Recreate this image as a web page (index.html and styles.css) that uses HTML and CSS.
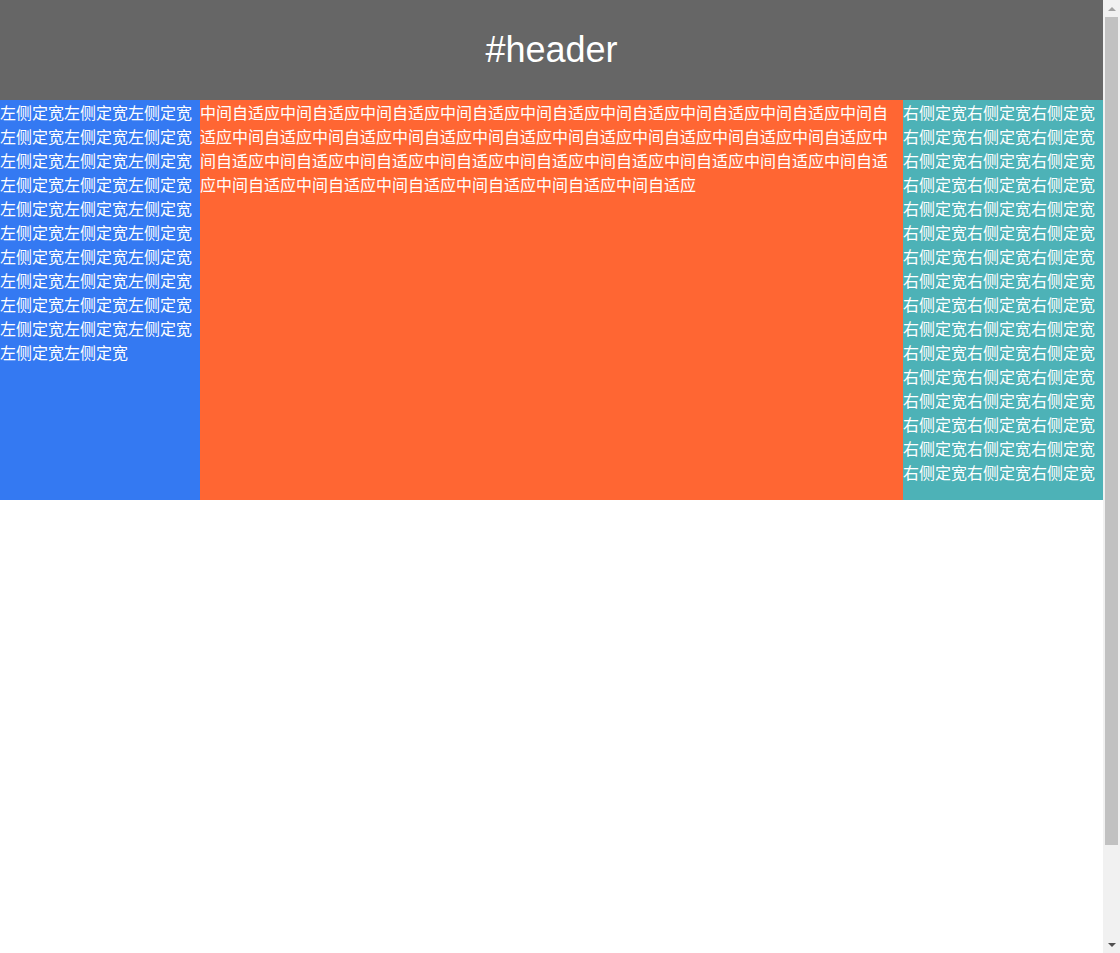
FILE: index.html
```html
<!DOCTYPE html>
<html lang="zh">
<head>
<meta charset="utf-8">
<title>三栏布局</title>
<link rel="stylesheet" href="styles.css">
</head>
<body>
<div class="page">
  <div class="header">#header</div>
  <div class="main">
    <div class="left">左侧定宽左侧定宽左侧定宽左侧定宽左侧定宽左侧定宽左侧定宽左侧定宽左侧定宽左侧定宽左侧定宽左侧定宽左侧定宽左侧定宽左侧定宽左侧定宽左侧定宽左侧定宽左侧定宽左侧定宽左侧定宽左侧定宽左侧定宽左侧定宽左侧定宽左侧定宽左侧定宽左侧定宽左侧定宽左侧定宽左侧定宽左侧定宽</div>
    <div class="center">中间自适应中间自适应中间自适应中间自适应中间自适应中间自适应中间自适应中间自适应中间自适应中间自适应中间自适应中间自适应中间自适应中间自适应中间自适应中间自适应中间自适应中间自适应中间自适应中间自适应中间自适应中间自适应中间自适应中间自适应中间自适应中间自适应中间自适应中间自适应中间自适应中间自适应中间自适应中间自适应</div>
    <div class="right">右侧定宽右侧定宽右侧定宽右侧定宽右侧定宽右侧定宽右侧定宽右侧定宽右侧定宽右侧定宽右侧定宽右侧定宽右侧定宽右侧定宽右侧定宽右侧定宽右侧定宽右侧定宽右侧定宽右侧定宽右侧定宽右侧定宽右侧定宽右侧定宽右侧定宽右侧定宽右侧定宽右侧定宽右侧定宽右侧定宽右侧定宽右侧定宽右侧定宽右侧定宽右侧定宽右侧定宽右侧定宽右侧定宽右侧定宽右侧定宽右侧定宽右侧定宽右侧定宽右侧定宽右侧定宽右侧定宽右侧定宽右侧定宽</div>
  </div>
</div>
<div class="scrollbar" aria-hidden="true">
  <div class="sb-up"></div>
  <div class="sb-track"><div class="sb-thumb"></div></div>
  <div class="sb-down"></div>
</div>
</body>
</html>
```

FILE: styles.css
```css
html, body {
  margin: 0;
  padding: 0;
}
body {
  font-family: "Noto Sans CJK SC", "Liberation Sans", sans-serif;
  font-size: 16px;
  line-height: 24px;
  color: #fff;
  background: #fff;
}
.page {
  width: calc(100% - 17px);
}
.header {
  height: 100px;
  line-height: 100px;
  background: #666666;
  text-align: center;
  font-family: "Liberation Sans", Arial, sans-serif;
  font-size: 36px;
  color: #fff;
}
.main {
  display: flex;
  height: 400px;
}
.left {
  width: 200px;
  flex: none;
  background: #3479f2;
  word-break: break-all;
}
.center {
  flex: 1;
  background: #ff6633;
  word-break: break-all;
}
.right {
  width: 200px;
  flex: none;
  background: #4db2b7;
  word-break: break-all;
}

/* browser scrollbar */
.scrollbar {
  position: fixed;
  top: 0;
  right: 0;
  bottom: 0;
  width: 17px;
  background: #f1f1f1;
  display: flex;
  flex-direction: column;
}
.sb-up,
.sb-down {
  height: 17px;
  flex: none;
  display: flex;
  justify-content: center;
  align-items: center;
}
.sb-up::before {
  content: "";
  border-left: 4px solid transparent;
  border-right: 4px solid transparent;
  border-bottom: 4px solid #a3a3a3;
}
.sb-down::before {
  content: "";
  border-left: 4px solid transparent;
  border-right: 4px solid transparent;
  border-top: 4px solid #505050;
}
.sb-track {
  flex: 1;
  padding: 0 2px;
}
.sb-thumb {
  height: 828px;
  background: #c1c1c1;
}
```
